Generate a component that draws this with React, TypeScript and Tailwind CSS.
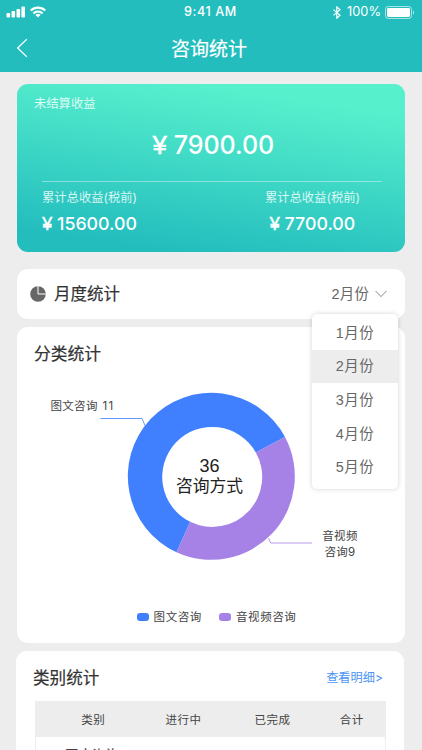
import { clsx } from 'clsx'

const months = ['1月份', '2月份', '3月份', '4月份', '5月份']

const legend = [
  { name: '图文咨询', color: 'bg-[#4080ff]' },
  { name: '音视频咨询', color: 'bg-[#a682e6]' },
]

function StatusBar() {
  return (
    <div className="flex h-6 items-center justify-between pl-[6px] pr-[7px] text-white">
      <div className="flex w-[120px] items-center gap-[5px]">
        <svg width="19" height="12" viewBox="0 0 19 12" fill="currentColor">
          <rect x="0.5" y="7" width="3.6" height="4.6" rx="1" />
          <rect x="5.5" y="5" width="3.6" height="6.6" rx="1" />
          <rect x="10.5" y="3" width="3.6" height="8.6" rx="1" />
          <rect x="15.4" y="0.6" width="3.6" height="11" rx="1" />
        </svg>
        <svg width="16" height="12" viewBox="0 0 16 12" fill="none" stroke="currentColor" strokeWidth="2.1">
          <path d="M0.8 4.6a10.2 10.2 0 0 1 14.4 0" />
          <path d="M3.4 7.4a6.5 6.5 0 0 1 9.2 0" />
          <path d="M8 11.6L5.4 9a3.7 3.7 0 0 1 5.2 0z" fill="currentColor" stroke="none" />
        </svg>
      </div>
      <span className="text-[12.6px] font-medium leading-none tracking-[0.6px]">9:41 AM</span>
      <div className="flex w-[120px] items-center justify-end">
        <svg className="mr-[6px]" width="8" height="13" viewBox="0 0 8 13" fill="none" stroke="currentColor" strokeWidth="1.2">
          <path d="M0.5 3.6l6.5 5.6-3.2 3V0.9l3.2 2.9-6.5 5.6" />
        </svg>
        <span className="mr-[4px] text-[12.8px] leading-none">100%</span>
        <svg width="30" height="13" viewBox="0 0 30 13">
          <rect x="0.5" y="0.5" width="26" height="12" rx="2.8" fill="none" stroke="white" strokeOpacity="0.6" />
          <rect x="2" y="2" width="23" height="9" rx="1.4" fill="white" />
          <path d="M28 4.4c1.6 0.8 1.6 3.4 0 4.2z" fill="white" fillOpacity="0.6" />
        </svg>
      </div>
    </div>
  )
}

function Header() {
  return (
    <header className="h-[72px] bg-[#23bdbe]">
      <StatusBar />
      <div className="grid h-12 grid-cols-[40px_1fr_40px] items-center text-white">
        <svg className="ml-[16px]" width="12" height="20" viewBox="0 0 12 20" fill="none" stroke="currentColor" strokeWidth="1.2">
          <path d="M10.8 1.2L1.6 10l9.2 8.8" />
        </svg>
        <h1 className="pr-1 pt-[3px] text-center text-[19px] leading-none [-webkit-text-stroke:0.2px]">咨询统计</h1>
      </div>
    </header>
  )
}

function IncomeCard() {
  return (
    <section className="h-[168px] rounded-[11px] bg-[linear-gradient(188deg,#57f0cd_14%,#23bdbe_90%)] pt-[13px] text-white">
      <p className="pl-[17px] text-[12.3px] leading-[14px] text-white/80">未结算收益</p>
      <p className="mt-[20px] flex h-[28px] items-center justify-center gap-[7px] pl-[5px] text-[25px] font-medium leading-none">
        <span className="font-['Liberation_Sans'] font-normal [-webkit-text-stroke:0.7px]">¥</span>
        <span>7900.00</span>
      </p>
      <div className="ml-[25px] mr-[23px] mt-[22px] h-px bg-white/40" />
      <div className="flex justify-between pl-[25px] pr-[45px] pt-[9px]">
        {['15600.00', '7700.00'].map((amount) => (
          <div key={amount}>
            <p className="text-[12.3px] leading-[14px] text-white/80">累计总收益(税前)</p>
            <p className="mt-[9px] flex justify-center gap-[5px] text-[17.8px] font-medium leading-5">
              <span className="font-['Liberation_Sans'] font-normal [-webkit-text-stroke:0.5px]">¥</span>
              <span>{amount}</span>
            </p>
          </div>
        ))}
      </div>
    </section>
  )
}

function MonthMenu() {
  return (
    <ul className="absolute left-[295px] top-[45px] z-10 h-[175px] w-[86px] overflow-hidden rounded-[5px] bg-white pt-[2px] shadow-[0_0_5px_rgba(0,0,0,0.18)]">
      {months.map((month) => (
        <li
          key={month}
          className={clsx(
            "flex h-[33.7px] items-center justify-center font-['Liberation_Sans','Noto_Sans_CJK_SC',sans-serif] text-[14.4px] leading-none tracking-[0.5px] text-[#666]",
            month === '2月份' && 'bg-[#ededed]',
          )}
        >
          {month}
        </li>
      ))}
    </ul>
  )
}

function MonthCard() {
  return (
    <section className="relative mt-[17px] flex h-[50px] items-center rounded-[11px] bg-white pl-[13px] pr-[18px]">
      <svg width="16" height="16" viewBox="0 0 16 16">
        <circle cx="8" cy="8" r="7.8" fill="#666" />
        <path d="M8 0v8h8" fill="none" stroke="white" strokeWidth="1" />
      </svg>
      <h2 className="ml-[8px] pt-px text-[16.5px] leading-none text-[#333] [-webkit-text-stroke:0.2px]">月度统计</h2>
      <span className="ml-auto pt-px font-['Liberation_Sans','Noto_Sans_CJK_SC',sans-serif] text-[14.4px] leading-none tracking-[0.2px] text-[#666]">2月份</span>
      <svg className="ml-[6px]" width="12" height="8" viewBox="0 0 12 8" fill="none" stroke="#888" strokeWidth="1">
        <path d="M0.6 1l5.4 5.6L11.4 1" />
      </svg>
      <MonthMenu />
    </section>
  )
}

function DonutChart() {
  return (
    <svg className="block" width="388" height="190" viewBox="17 381 388 190">
      <path d="M176.5 552.2A83.5 83.5 0 1 1 285 437L255.8 452.4A50 50 0 1 0 190.2 521.8z" fill="#4080ff" />
      <path d="M285 437A83.5 83.5 0 0 1 176.5 552.2L190.2 521.8A50 50 0 0 0 255.8 452.4z" fill="#a682e6" />
      <path d="M100.5 418.5H142l3 7" fill="none" stroke="#4080ff" strokeWidth="0.8" />
      <path d="M268.5 538l2.2 5H312" fill="none" stroke="#a682e6" strokeWidth="0.8" />
      <g fontSize="11.5" fill="#444" letterSpacing="0.3">
        <text x="50.5" y="409.5">图文咨询</text>
        <text x="102.5" y="409.5" letterSpacing="1.4">11</text>
        <text x="340" y="540" textAnchor="middle">音视频</text>
        <text x="340" y="555.5" textAnchor="middle">咨询9</text>
      </g>
      <g className="font-['Liberation_Sans','Noto_Sans_CJK_SC',sans-serif]" fill="#222" textAnchor="middle">
        <text x="209.5" y="472" fontSize="18">36</text>
        <text x="209.5" y="492" fontSize="16.8">咨询方式</text>
      </g>
    </svg>
  )
}

function CategoryChartCard() {
  return (
    <section className="mt-[8px] h-[316px] rounded-[11px] bg-white pt-[19px]">
      <h2 className="h-[35px] pl-[17px] text-[16.8px] leading-[17px] text-[#333] [-webkit-text-stroke:0.2px]">分类统计</h2>
      <DonutChart />
      <div className="mt-[39px] flex items-center justify-center gap-[17px] pl-[11px]">
        {legend.map((item) => (
          <div key={item.name} className="flex items-center gap-[5px]">
            <i className={clsx('h-[8px] w-[12px] rounded-[3px]', item.color)} />
            <span className="text-[11.5px] leading-[14px] tracking-[0.6px] text-[#444]">{item.name}</span>
          </div>
        ))}
      </div>
    </section>
  )
}

function DetailCard() {
  return (
    <section className="-ml-px mr-px mt-[8px] h-[140px] rounded-t-[11px] bg-white px-[18px]">
      <div className="flex h-[50px] items-center justify-between pr-[3px] pt-[4px]">
        <h2 className="-ml-px text-[16.6px] leading-none text-[#333] [-webkit-text-stroke:0.2px]">类别统计</h2>
        <a className="text-[12.2px] leading-none text-[#4b94f5]">查看明细&gt;</a>
      </div>
      <table className="ml-px w-[351px] table-fixed border border-[#ededed] text-center text-[11.5px] text-[#444]">
        <thead>
          <tr className="h-[35px] bg-[#ededed] tracking-[0.5px]">
            <th className="w-[115px] pt-[2px] font-normal leading-none">类别</th>
            <th className="w-[66px] pt-[2px] font-normal leading-none">进行中</th>
            <th className="w-[112px] pt-[2px] font-normal leading-none">已完成</th>
            <th className="pr-[10px] pt-[2px] font-normal leading-none">合计</th>
          </tr>
        </thead>
        <tbody>
          <tr className="h-[40px] align-top">
            <td className="pr-[2px] pt-[12px] text-[13.6px] leading-none">图文咨询</td>
            <td />
            <td />
            <td />
          </tr>
        </tbody>
      </table>
    </section>
  )
}

export default function App() {
  return (
    <div className="h-[750px] w-[422px] overflow-hidden bg-[#ededed] font-['Inter','Noto_Sans_CJK_SC',sans-serif]">
      <Header />
      <main className="px-[17px] pt-[12px]">
        <IncomeCard />
        <MonthCard />
        <CategoryChartCard />
        <DetailCard />
      </main>
    </div>
  )
}
